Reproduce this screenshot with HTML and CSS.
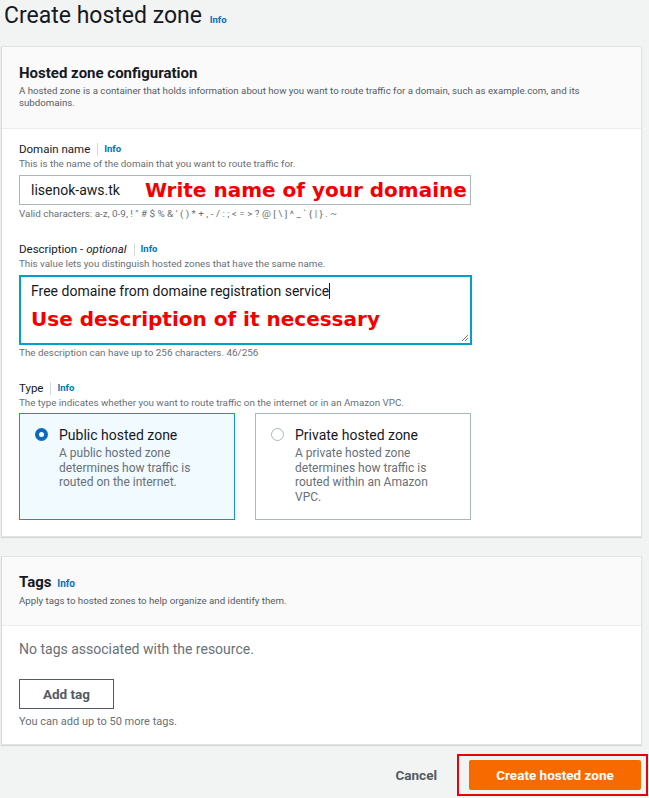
FILE: index.html
```html
<!DOCTYPE html>
<html>
<head>
<meta charset="utf-8">
<link rel="stylesheet" href="styles.css">
</head>
<body>
<div class="page">
  <h1 class="title">Create hosted zone <span class="info">Info</span></h1>

  <section class="card">
    <div class="card-head">
      <h2 class="card-title">Hosted zone configuration</h2>
      <p class="card-desc">A hosted zone is a container that holds information about how you want to route traffic for a domain, such as example.com, and its subdomains.</p>
    </div>
    <div class="card-body">
      <div class="field">
        <div class="label">Domain name <span class="sep"></span><span class="info-s">Info</span></div>
        <div class="help">This is the name of the domain that you want to route traffic for.</div>
        <div class="input">
          <span class="value">lisenok-aws.tk</span>
          <span class="note note1">Write name of your domaine</span>
        </div>
        <div class="constraint">Valid characters: a-z, 0-9, ! " # $ % &amp; ' ( ) * + , - / : ; &lt; = &gt; ? @ [ \ ] ^ _ ` { | } . ~</div>
      </div>

      <div class="field">
        <div class="label">Description - <i>optional</i> <span class="sep"></span><span class="info-s">Info</span></div>
        <div class="help">This value lets you distinguish hosted zones that have the same name.</div>
        <div class="textarea">
          <div class="value">Free domaine from domaine registration service<span class="caret"></span></div>
          <div class="note note2">Use description of it necessary</div>
          <svg class="grip" width="8" height="8" viewBox="0 0 8 8"><path d="M7 1L1 7M7 4L4 7" stroke="#777" stroke-width="1"/></svg>
        </div>
        <div class="constraint">The description can have up to 256 characters. 46/256</div>
      </div>

      <div class="field">
        <div class="label">Type <span class="sep"></span><span class="info-s">Info</span></div>
        <div class="help">The type indicates whether you want to route traffic on the internet or in an Amazon VPC.</div>
        <div class="tiles">
          <div class="tile selected">
            <span class="radio on"></span>
            <div class="tile-text">
              <div class="tile-title">Public hosted zone</div>
              <div class="tile-desc">A public hosted zone determines how traffic is routed on the internet.</div>
            </div>
          </div>
          <div class="tile">
            <span class="radio"></span>
            <div class="tile-text">
              <div class="tile-title">Private hosted zone</div>
              <div class="tile-desc">A private hosted zone determines how traffic is routed within an Amazon VPC.</div>
            </div>
          </div>
        </div>
      </div>
    </div>
  </section>

  <section class="card card2">
    <div class="card-head head2">
      <h2 class="card-title">Tags <span class="info">Info</span></h2>
      <p class="card-desc">Apply tags to hosted zones to help organize and identify them.</p>
    </div>
    <div class="card-body body2">
      <div class="empty">No tags associated with the resource.</div>
      <button class="btn">Add tag</button>
      <div class="c2">You can add up to 50 more tags.</div>
    </div>
  </section>

  <div class="footer">
    <span class="cancel">Cancel</span>
    <div class="highlight"><button class="primary">Create hosted zone</button></div>
  </div>
</div>
</body>
</html>
```

FILE: styles.css
```css
* { box-sizing: border-box; }
html, body { margin: 0; padding: 0; }
body {
  background: #f2f3f3;
  font-family: Roboto, "Liberation Sans", sans-serif;
  color: #16191f;
  width: 649px;
  height: 798px;
  overflow: hidden;
}
.page { padding: 0 7px 0 1px; }
.title {
  margin: 0;
  padding: 1px 0 0 3px;
  font-weight: 400;
  font-size: 23px;
  line-height: 30px;
  height: 46px;
}
.title .info { font-size: 9.5px; margin-left: 2px; }
.info {
  font-size: 10px;
  font-weight: 700;
  color: #0073bb;
}
.card {
  background: #fff;
  border: 1px solid #e1e4e4;
  border-left-color: #d5dbdb;
  box-shadow: 0 1px 1px rgba(0,28,36,0.12);
}
.card-head {
  background: #fafafa;
  border-bottom: 1px solid #eaeded;
  padding: 17px 17px 0;
  height: 82px;
}
.card-title {
  margin: 0;
  font-size: 15px;
  font-weight: 700;
  line-height: 18px;
}
.card-title .info { font-size: 10px; margin-left: 2px; }
.card-desc {
  margin: 3px 0 0;
  font-size: 9.7px;
  line-height: 12px;
  color: #545b64;
}
.card-body { padding: 13px 17px 16px; }
.field { margin-bottom: 22px; }
.field:last-child { margin-bottom: 0; }
.label {
  font-size: 11.5px;
  line-height: 14px;
  display: flex;
  align-items: center;
}
.label i { margin-left: 3px; }
.sep {
  display: inline-block;
  width: 1px;
  height: 13px;
  background: #d5dbdb;
  margin: 0 6px 0 7px;
}
.info-s {
  font-size: 9.5px;
  font-weight: 700;
  color: #0073bb;
}
.help {
  font-size: 9.8px;
  line-height: 12px;
  color: #687078;
  margin-top: 2px;
}
.input {
  margin-top: 5px;
  width: 452px;
  height: 30px;
  border: 1px solid #aab7b8;
  display: flex;
  align-items: center;
  padding-left: 11px;
}
.value { font-size: 14px; color: #16191f; }
.note {
  font-family: "DejaVu Sans", sans-serif;
  font-weight: 700;
  color: #f40000;
  font-size: 20px;
}
.note1 { margin-left: 25px; line-height: 24px; }
.constraint {
  font-size: 9.9px;
  line-height: 12px;
  color: #687078;
  margin-top: 3px;
}
.textarea {
  position: relative;
  margin-top: 5px;
  width: 453px;
  height: 70px;
  border: 2px solid #00a1c9;
  padding: 5px 10px 0 10px;
}
.textarea .value { line-height: 18px; }
.caret {
  display: inline-block;
  width: 1px;
  height: 16px;
  background: #16191f;
  vertical-align: -3px;
}
.textarea + .constraint { margin-top: 2px; }
.note2 { margin-top: 7px; line-height: 24px; }
.grip { position: absolute; right: 1px; bottom: 1px; }
.tiles {
  display: flex;
  gap: 20px;
  margin-top: 4px;
}
.tile {
  width: 216px;
  height: 107px;
  border: 1px solid #aab7b8;
  padding: 12px 8px 0 15px;
  display: flex;
  gap: 11px;
  background: #fff;
}
.tile.selected {
  border-color: #0a9ac3;
  background: #f1faff;
}
.tile-text { width: 150px; }
.radio {
  flex: none;
  width: 13px;
  height: 13px;
  border-radius: 50%;
  border: 1.5px solid #aab7b8;
  margin-top: 2px;
  background: #fff;
}
.radio.on {
  border: 4px solid #0b6ac1;
}
.tile-title { font-size: 14px; line-height: 18px; }
.tile-desc {
  font-size: 12px;
  line-height: 14.7px;
  color: #687078;
  margin-top: 2px;
}
.card2 { margin-top: 19px; }
.head2 { height: 69px; padding-top: 16px; }
.head2 .card-desc { margin-top: 2px; }
.body2 { padding: 14px 17px 15px; }
.empty {
  font-size: 14px;
  line-height: 18px;
  color: #687078;
}
.btn {
  display: block;
  margin-top: 21px;
  width: 95px;
  height: 30px;
  border: 1px solid #545b64;
  background: #fff;
  font-family: inherit;
  font-weight: 700;
  font-size: 13.5px;
  color: #545b64;
  padding: 0;
}
.c2 { font-size: 11px; line-height: 14px; margin-top: 6px; color: #687078; }
.footer {
  display: flex;
  justify-content: flex-end;
  align-items: center;
  margin-top: 9px;
  margin-right: -6px;
  gap: 20px;
}
.cancel {
  font-weight: 700;
  font-size: 13.5px;
  color: #545b64;
}
.highlight {
  border: 2px solid #e8000b;
  padding: 4px 5px 4px 10px;
}
.primary {
  display: block;
  width: 172px;
  height: 30px;
  border: none;
  border-radius: 2px;
  background: #f66a00;
  color: #fff;
  font-family: inherit;
  font-weight: 700;
  font-size: 13.5px;
  padding: 0;
}
```
